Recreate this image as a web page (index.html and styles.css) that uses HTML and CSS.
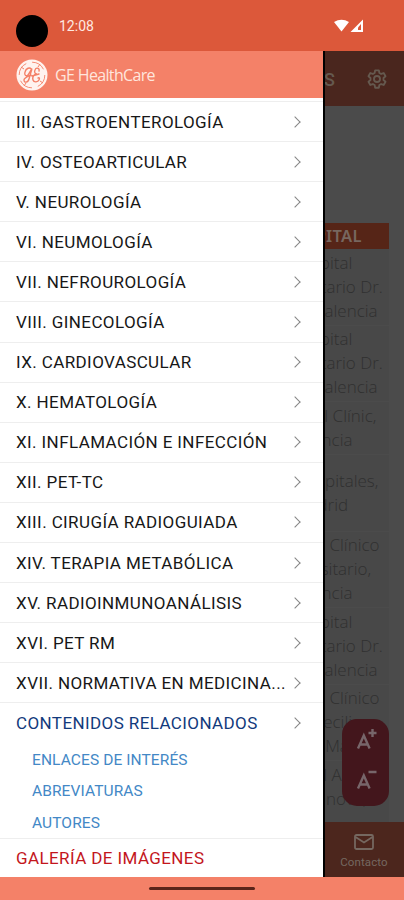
FILE: index.html
```html
<!DOCTYPE html>
<html lang="es">
<head>
<meta charset="utf-8">
<title>GE HealthCare</title>
<link rel="stylesheet" href="styles.css">
</head>
<body>
<div class="phone">
  <header class="status">
    <span class="camera"></span>
    <span class="clock">12:08</span>
    <svg class="signals" width="30" height="14" viewBox="0 0 30 14"><path d="M0 3Q7.500-1.500 15 3L7.500 12.500Z" fill="#fff"/><path d="M29 .5V13H16.500Z" fill="#fff"/><path d="M27 5V11H24V8.500Z" fill="#dc583a"/></svg>
  </header>
  <div class="stage">
    <main class="page">
      <div class="appbar">
        <span class="appbar-title">AUTORES</span>
        <svg width="22" height="22" viewBox="0 0 24 24" fill="none" stroke="#65594f" stroke-width="2" stroke-linejoin="round"><path d="M10 2.500h4l.6 2.900 1.900 1.100 2.800-1 2 3.500-2.200 1.900v2.200l2.200 1.900-2 3.500-2.800-1-1.900 1.100-.6 2.900h-4l-.6-2.900-1.900-1.100-2.800 1-2-3.500 2.200-1.900v-2.200L2.700 9l2-3.500 2.800 1 1.900-1.100z"/><circle cx="12" cy="12" r="3.300"/></svg>
      </div>
      <div class="content">
        <div class="table">
          <div class="th">HOSPITAL</div>
          <div class="td">Hospital<br>Universitario Dr.<br>Peset, Valencia</div>
          <div class="td">Hospital<br>Universitario Dr.<br>Peset, Valencia</div>
          <div class="td short">Hospital Clínic,<br>Valencia</div>
          <div class="td">HM Hospitales,<br>Madrid</div>
          <div class="td">Hospital Clínico<br>Universitario,<br>Valencia</div>
          <div class="td">Hospital<br>Universitario Dr.<br>Peset, Valencia</div>
          <div class="td">Hospital Clínico<br>San Cecilio<br>Campo, Madrid</div>
          <div class="td last">Hospital Arnau<br>de Vilanova,</div>
        </div>
      </div>
      <div class="tabbar">
        <div class="tab">
          <svg width="20" height="16" viewBox="0 0 20 16" fill="none" stroke="#756860" stroke-width="1.800"><rect x="1" y="1" width="18" height="14" rx="1.500"/><path d="M1.500 3L10 8.500 18.500 3"/></svg>
          <span>Contacto</span>
        </div>
      </div>
    </main>
    <div class="sizer">
      <svg width="22" height="24" viewBox="0 0 22 24" fill="none" stroke="#77666a" stroke-width="2.400"><path d="M2 20.500L7.800 7.500 13.600 20.500M4 16.500h7.600M12.500 5h8M16.500 1v8"/></svg>
      <svg width="22" height="24" viewBox="0 0 22 24" fill="none" stroke="#77666a" stroke-width="2.400"><path d="M2 20.500L7.800 7.500 13.600 20.500M4 16.500h7.600M12.500 4h8"/></svg>
    </div>
    <nav class="drawer">
      <div class="brand">
        <svg width="32" height="32" viewBox="0 0 32 32" fill="none" stroke="#f48168"><circle cx="16" cy="16" r="15.500" fill="#fff3ef" stroke="none"/><circle cx="16" cy="16" r="12.800" stroke-width=".9" stroke-dasharray="14 6"/><path d="M15 10c-1-2-5-1-6 3-1 3 1 5 3 3l3-5c1-2 1-1 0 2l-2 7c-1 4-5 4-5 1 0-2 3-3 7-5M23 12c1-3-3-4-4-1-1 2 0 4 2 4-3 0-5 3-4 6s5 2 6 0 0-3-1-2M16 17l7-2" stroke-width="1.400" stroke-linecap="round"/><path d="M5 8l3 2M24 5l-2 3M27 24l-3-2M8 27l2-3" stroke-width="1"/></svg>
        <span class="brand-name">GE HealthCare</span>
      </div>
      <ul class="menu">
        <li><span>III. GASTROENTEROLOGÍA</span><i></i></li>
        <li><span>IV. OSTEOARTICULAR</span><i></i></li>
        <li><span>V. NEUROLOGÍA</span><i></i></li>
        <li><span>VI. NEUMOLOGÍA</span><i></i></li>
        <li><span>VII. NEFROUROLOGÍA</span><i></i></li>
        <li><span>VIII. GINECOLOGÍA</span><i></i></li>
        <li><span>IX. CARDIOVASCULAR</span><i></i></li>
        <li><span>X. HEMATOLOGÍA</span><i></i></li>
        <li><span>XI. INFLAMACIÓN E INFECCIÓN</span><i></i></li>
        <li><span>XII. PET-TC</span><i></i></li>
        <li><span>XIII. CIRUGÍA RADIOGUIADA</span><i></i></li>
        <li><span>XIV. TERAPIA METABÓLICA</span><i></i></li>
        <li><span>XV. RADIOINMUNOANÁLISIS</span><i></i></li>
        <li><span>XVI. PET RM</span><i></i></li>
        <li><span>XVII. NORMATIVA EN MEDICINA...</span><i></i></li>
        <li class="related"><span>CONTENIDOS RELACIONADOS</span><i></i></li>
      </ul>
      <ul class="sub">
        <li>ENLACES DE INTERÉS</li>
        <li>ABREVIATURAS</li>
        <li>AUTORES</li>
      </ul>
      <div class="gallery">GALERÍA DE IMÁGENES</div>
    </nav>
  </div>
  <footer class="gesture"><span></span></footer>
</div>
</body>
</html>
```

FILE: styles.css
```css
* { box-sizing: border-box; }
body { margin: 0; font-family: Roboto, "Liberation Sans", sans-serif; }
ul { list-style: none; margin: 0; padding: 0; }
svg { display: block; flex: none; }
.phone { width: 404px; height: 900px; display: flex; flex-direction: column; overflow: hidden; }

.status { height: 51px; flex: none; background: #dc583a; display: flex; padding: 15px 40px 0 16px; }
.camera { width: 32px; height: 32px; border-radius: 50%; background: #000; }
.clock { margin: 3px 0 0 11px; font-size: 14px; line-height: 17px; color: #ffe9e1; }
.signals { margin: 4px 0 0 auto; }

.stage { position: relative; height: 826px; flex: none; overflow: hidden; }

.page { height: 100%; display: flex; flex-direction: column; background: #4b4b4b; }
.appbar { height: 55px; flex: none; background: #4a261e; display: flex; align-items: center; justify-content: flex-end; gap: 31px; padding: 1px 16px 0 0; }
.appbar-title { font-size: 18px; font-weight: 500; color: #65594f; }
.content { flex: 1; min-height: 0; overflow: hidden; padding: 117px 15px 0 253px; }
.table { background: #484848; font-family: "Open Sans", "Noto Sans", sans-serif; text-align: center; }
.th { height: 26px; background: #562517; color: #77675f; font-family: "Noto Sans", sans-serif; font-size: 16.500px; font-weight: 600; line-height: 25px; letter-spacing: .3px; }
.td { height: 76.500px; display: grid; align-content: center; border-bottom: 1px solid #4b4b4b; font-size: 17px; font-weight: 300; line-height: 24px; color: #303030; white-space: nowrap; }
.td.short { height: 53px; }
.td.last { align-content: start; padding-top: 2px; }
.tabbar { height: 55px; flex: none; background: #4c261d; display: flex; justify-content: flex-end; }
.tab { width: 80px; display: flex; flex-direction: column; align-items: center; gap: 5px; padding-top: 12px; font-size: 11.500px; line-height: 14px; letter-spacing: .1px; color: #756860; }

.sizer { position: absolute; left: 342px; top: 668px; width: 47px; height: 87px; border-radius: 15px; background: #43161c; display: flex; flex-direction: column; align-items: center; gap: 16px; padding-top: 9px; padding-left: 3px; }

.drawer { position: absolute; left: 0; top: 0; width: 325px; height: 100%; background: #fff; border-right: 2px solid #000; }
.brand { height: 47px; background: #f48168; display: flex; align-items: center; gap: 7px; padding: 1px 0 0 16px; }
.brand-name { font-family: "Open Sans", sans-serif; font-size: 16px; letter-spacing: -.65px; color: #ffe6dd; white-space: nowrap; }
.menu { margin-top: 3px; border-top: 1px solid #eee; }
.menu li { height: 40.100px; display: flex; align-items: center; justify-content: space-between; padding: 0 24px 0 16px; border-bottom: 1px solid #eee; font-size: 17px; letter-spacing: .4px; color: #171717; white-space: nowrap; }
.menu i { width: 8px; height: 8px; border: solid #858585; border-width: 1.500px 1.500px 0 0; transform: rotate(45deg); flex: none; }
.menu .related { border-bottom: 0; color: #123a7c; }
.sub { padding: 0 0 0 32px; }
.sub li { height: 31.500px; line-height: 32px; font-size: 15.500px; letter-spacing: .1px; color: #4388c6; }
.gallery { height: 40px; border-top: 1px solid #eee; padding-left: 16px; line-height: 39px; font-size: 17px; letter-spacing: .4px; color: #c3161c; }

.gesture { height: 23px; background: #f48168; display: flex; justify-content: center; padding-top: 10px; }
.gesture span { width: 106px; height: 3px; border-radius: 2px; background: #5b241a; }
```
